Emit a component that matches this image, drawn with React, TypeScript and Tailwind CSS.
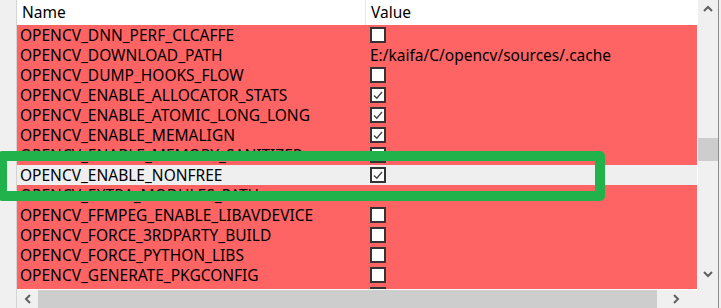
import React from "react";

type Row = { name: string; value?: string; check?: boolean; selected?: boolean };

const rows: Row[] = [
  { name: "OPENCV_DNN_PERF_CLCAFFE", check: false },
  { name: "OPENCV_DOWNLOAD_PATH", value: "E:/kaifa/C/opencv/sources/.cache" },
  { name: "OPENCV_DUMP_HOOKS_FLOW", check: false },
  { name: "OPENCV_ENABLE_ALLOCATOR_STATS", check: true },
  { name: "OPENCV_ENABLE_ATOMIC_LONG_LONG", check: true },
  { name: "OPENCV_ENABLE_MEMALIGN", check: true },
  { name: "OPENCV_ENABLE_MEMORY_SANITIZER", check: false },
  { name: "OPENCV_ENABLE_NONFREE", check: true, selected: true },
  { name: "OPENCV_EXTRA_MODULES_PATH", value: "" },
  { name: "OPENCV_FFMPEG_ENABLE_LIBAVDEVICE", check: false },
  { name: "OPENCV_FORCE_3RDPARTY_BUILD", check: false },
  { name: "OPENCV_FORCE_PYTHON_LIBS", check: false },
  { name: "OPENCV_GENERATE_PKGCONFIG", check: false },
  // next row is scrolled mostly out of view, only its checkbox top shows
  { name: "", check: false },
];

function CheckBox({ checked }: { checked: boolean }) {
  return (
    <div className="w-[16px] h-[16px] border-2 border-[#333333] bg-white flex items-center justify-center">
      {checked && (
        <svg width="12" height="12" viewBox="0 0 12 12">
          <path d="M2 6.5 L4.8 9.2 L10 3" fill="none" stroke="#444" strokeWidth="1.4" />
        </svg>
      )}
    </div>
  );
}

function Chevron({ dir }: { dir: "up" | "down" | "left" | "right" }) {
  const d = {
    up: "M1 6 L5 2 L9 6",
    down: "M1 2 L5 6 L9 2",
    left: "M6 1 L2 5 L6 9",
    right: "M2 1 L6 5 L2 9",
  }[dir];
  const vertical = dir === "up" || dir === "down";
  return (
    <svg width={vertical ? 10 : 8} height={vertical ? 8 : 10} viewBox={vertical ? "0 0 10 8" : "0 0 8 10"}>
      <path d={d} fill="none" stroke="#606060" strokeWidth="2" />
    </svg>
  );
}

export default function App() {
  return (
    <div
      className="relative w-[721px] h-[308px] overflow-hidden bg-[#f0f0f0] flex text-black"
      style={{ fontFamily: '"Noto Sans", "Liberation Sans", sans-serif' }}
    >
      {/* Row gutter */}
      <div className="w-[17px] h-full border-r border-[#d4d4d4] bg-[#f0f0f0]" />

      {/* Table */}
      <div className="w-[680px] h-full flex flex-col">
        <div className="h-[25px] bg-white flex text-[15.5px] leading-[24px]">
          <div className="w-[349px] pl-[5px] border-r border-[#e5e5e5]">Name</div>
          <div className="flex-1 pl-[5px]">Value</div>
        </div>

        <div className="h-[264px] overflow-hidden flex flex-col">
          {rows.map((r, i) => (
            <div
              key={i}
              className={`h-[20px] shrink-0 flex items-center text-[15.5px] leading-[20px] ${
                r.selected ? "bg-[#efefef]" : "bg-[#ff6464]"
              }`}
            >
              <div className="w-[349px] pl-[3px] whitespace-nowrap">{r.name}</div>
              <div className="flex-1 pl-[4px] whitespace-nowrap">
                {r.check !== undefined ? <CheckBox checked={r.check} /> : r.value}
              </div>
            </div>
          ))}
        </div>

        {/* Horizontal scrollbar */}
        <div className="h-[19px] border-t border-white flex items-stretch bg-[#f0f0f0]">
          <div className="w-[21px] flex items-center justify-center">
            <Chevron dir="left" />
          </div>
          <div className="w-[619px] bg-[#cdcdcd]" />
          <div className="flex-1 flex items-center justify-center pr-[2px]">
            <Chevron dir="right" />
          </div>
        </div>
      </div>

      {/* Vertical scrollbar */}
      <div className="w-[24px] h-full flex">
        <div className="w-[21px] h-[289px] border-l border-white flex flex-col items-center">
          <div className="h-[16px] flex items-center justify-center mt-[1px]">
            <Chevron dir="up" />
          </div>
          <div className="w-full h-[23px] mt-[121px] bg-[#cdcdcd]" />
          <div className="flex-1" />
          <div className="h-[20px] flex items-center justify-center mb-[5px]">
            <Chevron dir="down" />
          </div>
        </div>
        <div className="w-[1px] h-full bg-[#8a8a8a]" />
        <div className="flex-1" />
      </div>

      {/* Green highlight */}
      <div className="absolute left-[-3px] top-[151px] w-[608px] h-[50px] border-[10px] border-[#22b24c] rounded-[5px]" />
    </div>
  );
}
